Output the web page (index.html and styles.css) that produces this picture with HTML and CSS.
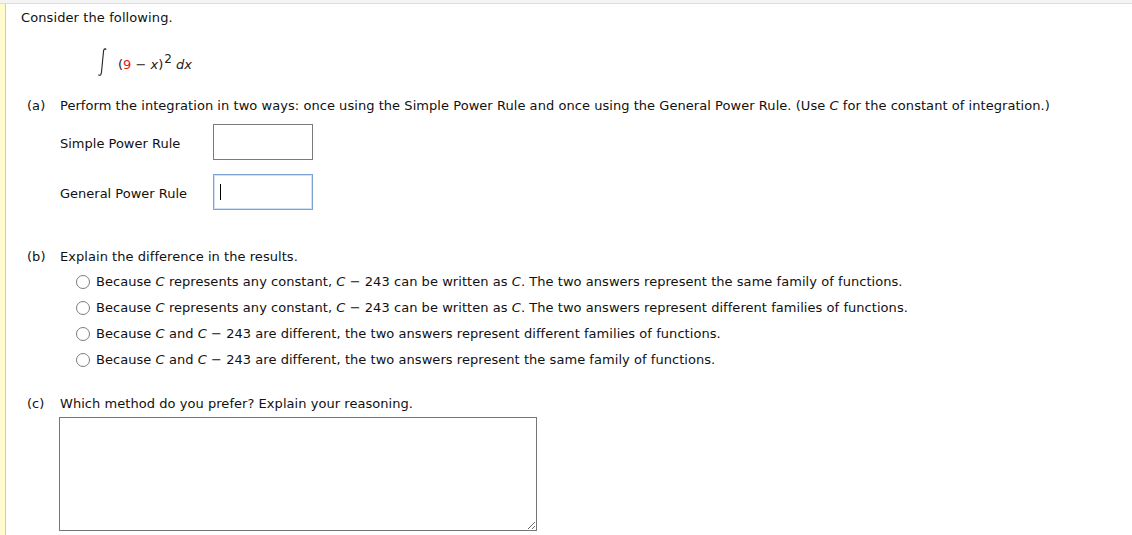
FILE: index.html
```html
<!DOCTYPE html>
<html>
<head>
<meta charset="utf-8">
<link rel="stylesheet" href="styles.css">
</head>
<body>
<div class="topbar"></div>
<div class="page">
  <div class="strip"></div>
  <div class="content">
    <p class="intro">Consider the following.</p>
    <div class="formula">
      <svg class="integral" width="10" height="28" viewBox="0 0 10 28"><path d="M9.2 1.6 C8.6 0.6 7.4 0.6 6.9 1.8 C6.5 2.8 6.4 4 6.3 5.5 L4.6 23 C4.5 24.6 4.3 26 3.6 26.8 C3 27.4 2 27.3 1.4 26.6" fill="none" stroke="#222" stroke-width="1.1"/></svg>
      <span class="expr">(<span class="red">9</span> − <i>x</i>)<sup>2</sup> <i>dx</i></span>
    </div>

    <div class="part">
      <span class="plabel">(a)</span>
      <span>Perform the integration in two ways: once using the Simple Power Rule and once using the General Power Rule. (Use <i>C</i> for the constant of integration.)</span>
    </div>
    <div class="answers">
      <div class="arow">
        <span class="alabel">Simple Power Rule</span>
        <span class="abox"></span>
      </div>
      <div class="arow">
        <span class="alabel">General Power Rule</span>
        <span class="abox focused"><span class="caret"></span></span>
      </div>
    </div>

    <div class="part partb">
      <span class="plabel">(b)</span>
      <span>Explain the difference in the results.</span>
    </div>
    <div class="options">
      <label class="opt"><input type="radio" name="b"><span>Because <i>C</i> represents any constant, <i>C</i> − 243 can be written as <i>C</i>. The two answers represent the same family of functions.</span></label>
      <label class="opt"><input type="radio" name="b"><span>Because <i>C</i> represents any constant, <i>C</i> − 243 can be written as <i>C</i>. The two answers represent different families of functions.</span></label>
      <label class="opt"><input type="radio" name="b"><span>Because <i>C</i> and <i>C</i> − 243 are different, the two answers represent different families of functions.</span></label>
      <label class="opt"><input type="radio" name="b"><span>Because <i>C</i> and <i>C</i> − 243 are different, the two answers represent the same family of functions.</span></label>
    </div>

    <div class="part partc">
      <span class="plabel">(c)</span>
      <span>Which method do you prefer? Explain your reasoning.</span>
    </div>
    <textarea class="essay"></textarea>
  </div>
</div>
</body>
</html>
```
FILE: styles.css
```css
html, body {
  margin: 0;
  padding: 0;
  background: #fff;
}
body {
  font-family: "DejaVu Sans", Verdana, sans-serif;
  font-size: 13px;
  line-height: 16px;
  color: #111;
}
.topbar {
  height: 3px;
  background: #f4f4f4;
  border-bottom: 1px solid #dcdcdc;
}
.page {
  display: flex;
  min-height: 531px;
}
.strip {
  width: 5px;
  background: #fffbcc;
  border-right: 1px solid #c8c8c8;
  flex: none;
}
.content {
  padding: 6px 0 0 15px;
  flex: 1;
}
.intro {
  margin: 0;
  letter-spacing: 0.1px;
}
.formula {
  display: flex;
  align-items: center;
  margin: 20px 0 0 76px;
  height: 30px;
}
.integral {
  display: block;
  margin-top: 1px;
}
.expr {
  font-size: 13px;
  margin-left: 11px;
  margin-top: 8px;
  color: #222;
}
.expr sup {
  font-size: 12px;
  line-height: 0;
  vertical-align: 6px;
  margin-left: 1px;
}
.red {
  color: #e8141b;
}
.part {
  display: flex;
  margin-top: 22px;
  letter-spacing: 0.05px;
}
.plabel {
  width: 39px;
  padding-left: 6px;
  box-sizing: border-box;
  flex: none;
}
.answers {
  margin: 10px 0 0 39px;
  display: flex;
  flex-direction: column;
  gap: 14px;
}
.arow {
  display: flex;
  align-items: center;
}
.alabel {
  width: 153px;
  margin-top: 3px;
}
.abox {
  width: 100px;
  height: 36px;
  box-sizing: border-box;
  border: 1px solid #7a7a7a;
  background: #fff;
  display: flex;
  align-items: center;
}
.abox.focused {
  border-color: #7aa3d3;
  box-shadow: inset 0 0 0 1px #cfe1f5;
}
.caret {
  width: 1px;
  height: 16px;
  background: #000;
  margin-left: 6px;
}
.partb {
  margin-top: 39px;
}
.options {
  margin: 9px 0 0 55px;
  display: flex;
  flex-direction: column;
  gap: 10px;
}
.opt {
  display: flex;
  align-items: center;
  letter-spacing: 0.05px;
}
.opt input {
  appearance: none;
  -webkit-appearance: none;
  width: 14px;
  height: 14px;
  margin: 0 6px 0 0;
  border: 1px solid #7d7d7d;
  border-radius: 50%;
  background: #fff;
  box-sizing: border-box;
  flex: none;
}
.partc {
  margin-top: 28px;
}
.essay {
  display: block;
  margin: 5px 0 0 38px;
  width: 478px;
  height: 114px;
  box-sizing: border-box;
  border: 1px solid #767676;
  border-radius: 0;
  resize: both;
  font-family: inherit;
  font-size: 13px;
}
```
